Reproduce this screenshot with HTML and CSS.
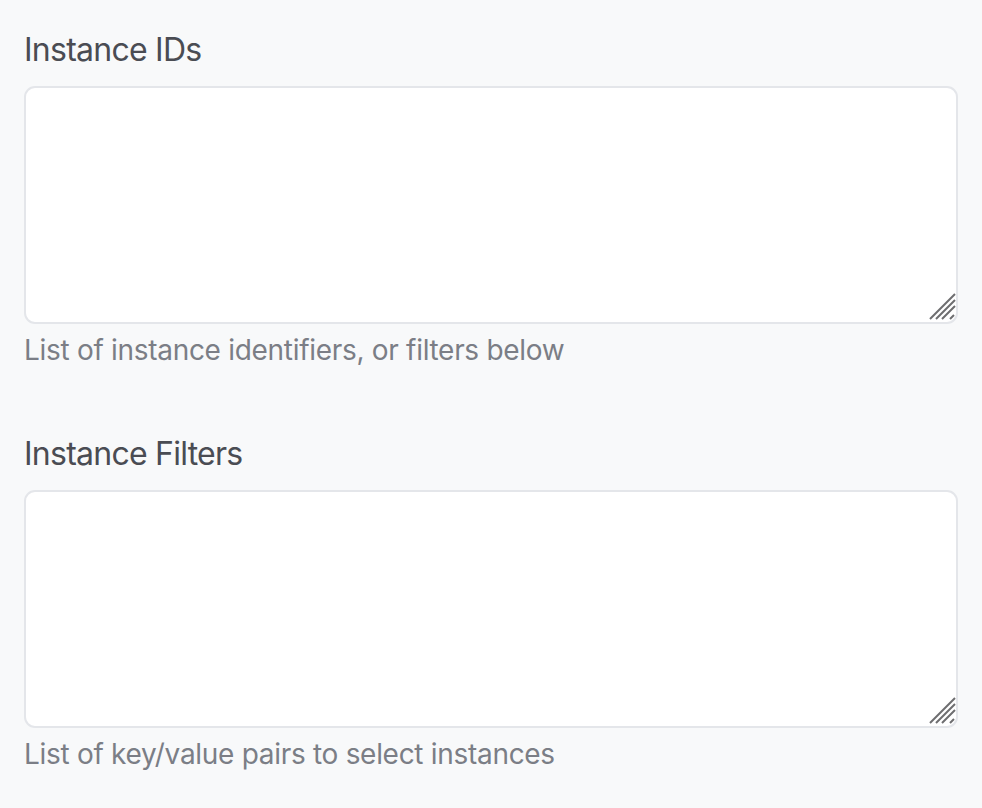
FILE: index.html
```html
<!DOCTYPE html>
<html lang="en">
<head>
<meta charset="utf-8">
<title>Instance form</title>
<link rel="stylesheet" href="styles.css">
</head>
<body>
<form class="form">
  <div class="field">
    <label class="field-label" for="ids">Instance IDs</label>
    <div class="textarea-wrap">
      <textarea id="ids" class="field-input"></textarea>
      <svg class="resizer" width="28" height="28" viewBox="0 0 28 28" aria-hidden="true">
        <path d="M2 26 L27 1 M8 26 L27 7 M14 26 L27 13 M22 26 L26 22" stroke="#6e6e70" stroke-width="2" fill="none"/>
      </svg>
    </div>
    <p class="field-help">List of instance identifiers, or filters below</p>
  </div>
  <div class="field">
    <label class="field-label" for="filters">Instance Filters</label>
    <div class="textarea-wrap">
      <textarea id="filters" class="field-input"></textarea>
      <svg class="resizer" width="28" height="28" viewBox="0 0 28 28" aria-hidden="true">
        <path d="M2 26 L27 1 M8 26 L27 7 M14 26 L27 13 M22 26 L26 22" stroke="#6e6e70" stroke-width="2" fill="none"/>
      </svg>
    </div>
    <p class="field-help">List of key/value pairs to select instances</p>
  </div>
</form>
</body>
</html>
```

FILE: styles.css
```css
html, body {
  margin: 0;
  padding: 0;
  background: #f8f9fa;
}

body {
  font-family: Inter, "Noto Sans", "Liberation Sans", sans-serif;
  padding: 30px 24px 0 24px;
}

.form {
  display: flex;
  flex-direction: column;
  gap: 64px;
  width: 934px;
}

.field {
  display: flex;
  flex-direction: column;
}

.field-label {
  font-size: 32px;
  line-height: 40px;
  letter-spacing: -0.75px;
  color: #4a4c53;
  margin-bottom: 16px;
}

.textarea-wrap {
  position: relative;
  height: 238px;
}

.field-input {
  display: block;
  box-sizing: border-box;
  width: 100%;
  height: 100%;
  margin: 0;
  border: 2px solid #e4e6ea;
  border-radius: 11px;
  background: #ffffff;
  resize: none;
  outline: none;
  font: inherit;
}

.resizer {
  position: absolute;
  right: 2px;
  bottom: 3px;
  pointer-events: none;
}

.field-help {
  margin: 6px 0 0 0;
  font-size: 28px;
  line-height: 40px;
  letter-spacing: -0.3px;
  color: #7b7e86;
}
```
